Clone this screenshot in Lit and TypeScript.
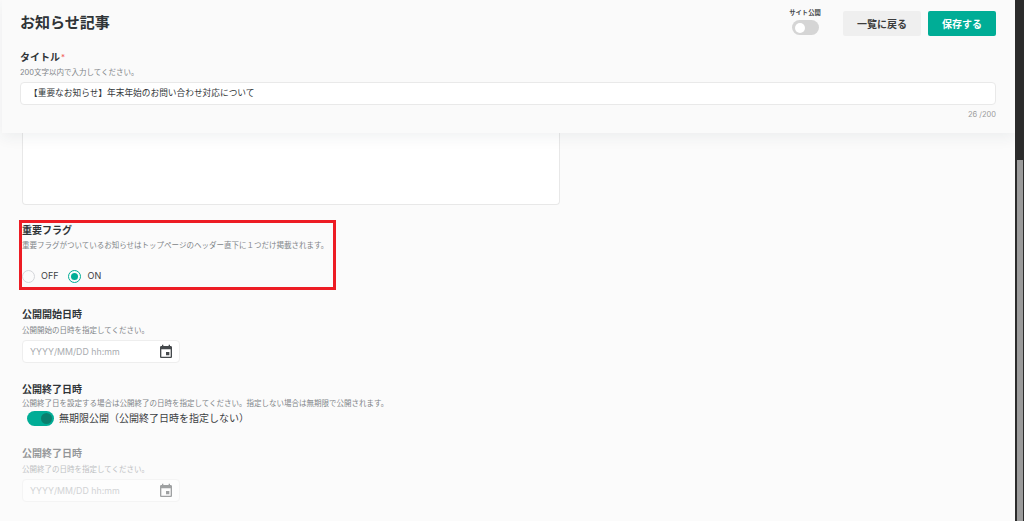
import { LitElement, html, css } from "lit";
import { customElement } from "lit/decorators.js";

const cal = html`<svg class="cal" viewBox="0 0 24 24" width="16" height="16"><path fill="currentColor" d="M17 12h-5v5h5v-5zM16 1v2H8V1H6v2H5c-1.11 0-2 .9-2 2v14c0 1.1.89 2 2 2h14c1.1 0 2-.9 2-2V5c0-1.1-.9-2-2-2h-1V1h-2zm3 18H5V8h14v11z"/></svg>`;

@customElement("app-root")
export class AppRoot extends LitElement {
  static styles = css`
    :host { display: block; height: 521px; overflow: hidden; font-family: Inter, "Noto Sans CJK JP", sans-serif; color: #2f3437; background: #fbfbfb; }
    * { box-sizing: border-box; }
    .page { display: flex; height: 521px; }
    .main { flex: 1; min-width: 0; padding-left: 2px; display: flex; flex-direction: column; overflow: hidden; }
    .head { position: relative; z-index: 1; flex: none; height: 133px; background: #fafafa; box-shadow: 0 4px 14px rgba(40,50,70,.07); padding: 0 19px 0 18px; }
    .top { display: flex; align-items: flex-start; height: 50px; }
    h1 { margin: 13px 0 0; font-size: 15px; line-height: 20px; font-weight: 700; flex: 1; }
    .pub { width: 40px; margin: 9px 18px 0 0; display: flex; flex-direction: column; align-items: center; }
    .pub span { font-size: 6.3px; line-height: 9px; font-weight: 700; white-space: nowrap; color: #45494c; }
    .sw { width: 27px; height: 15px; margin-top: 2px; border-radius: 8px; background: #d5d5d5; padding: 2px; }
    .sw i { display: block; width: 10px; height: 10px; margin: 1px 0 0 1px; border-radius: 50%; background: #fff; }
    .btn { height: 25px; margin-top: 11px; border-radius: 2px; font-size: 10px; font-weight: 700; display: flex; align-items: center; justify-content: center; }
    .back { width: 78px; background: #efefef; color: #3c3c3c; margin-right: 7px; }
    .save { width: 68px; background: #00ad96; color: #fff; }
    .lab { font-size: 10px; line-height: 14px; font-weight: 700; color: #2f3437; }
    .lab em { color: #f05a5a; font-style: normal; font-weight: 400; font-size: 8px; vertical-align: top; margin-left: 1px; }
    .hint { font-size: 7.5px; line-height: 12px; color: #808488; white-space: nowrap; }
    .head .hint { margin-top: 3px; }
    .title-in { height: 23px; margin-top: 3px; background: #fff; border: 1px solid #e9e9e9; border-radius: 4px; font-size: 8.7px; line-height: 21px; padding-left: 8px; color: #33373a; }
    .count { text-align: right; font-size: 7.5px; line-height: 10px; margin-top: 5px; color: #9a9a9a; }
    .body { flex: 1; padding-left: 20px; display: flex; flex-direction: column; align-items: flex-start; }
    .area { width: 538px; height: 72px; background: #fff; border: 1px solid #e8e8e8; border-top: 0; border-radius: 0 0 4px 4px; }
    .flag { width: 317px; height: 70px; margin: 15px 0 0 -3px; border: 3px solid #ed1c24; }
    .flag .hint { margin-top: 3px; }
    .radios { display: flex; align-items: center; margin-top: 17px; font-size: 9px; line-height: 14px; color: #3c4043; }
    .r { width: 13px; height: 13px; border-radius: 50%; border: 1px solid #d4d6da; flex: none; }
    .r.on { border: 1.5px solid #00ad96; display: flex; align-items: center; justify-content: center; margin-left: 9px; }
    .r.on i { width: 7px; height: 7px; border-radius: 50%; background: #00ad96; }
    .rt { margin-left: 6px; }
    .r.on + .rt { margin-left: 7px; }
    .sec { margin-top: 17px; }
    .sec .hint { margin-top: 4px; }
    .date { width: 158px; height: 23px; margin-top: 3px; background: #fff; border: 1px solid #eeeeee; border-radius: 4px; display: flex; align-items: center; justify-content: space-between; padding: 0 5px 0 7px; font-size: 8.8px; color: #a9acb0; }
    .cal { color: #45494c; display: block; }
    .inf { display: flex; align-items: center; font-size: 10px; line-height: 15px; color: #3c4043; margin: 1px 0 0 5px; }
    .tog { width: 27px; height: 15px; border-radius: 8px; background: #00ad96; margin-right: 5px; display: flex; justify-content: flex-end; padding: 2px 2px; }
    .tog i { width: 11px; height: 11px; border-radius: 50%; background: #0a7f6e; }
    .dis { opacity: .5; }
    .end { margin-top: 19px; }
    .end .hint { margin-top: 2px; }
    .last { margin-top: 20px; }
    .bar { flex: none; width: 9px; background: #2b2b2b; padding: 160px 1px 0 2px; }
    .thumb { height: 361px; background: #9b9b9b; }
  `;

  render() {
    return html`<div class="page">
      <div class="main">
        <header class="head">
          <div class="top">
            <h1>お知らせ記事</h1>
            <div class="pub"><span>サイト公開</span><div class="sw"><i></i></div></div>
            <div class="btn back">一覧に戻る</div>
            <div class="btn save">保存する</div>
          </div>
          <div class="lab">タイトル<em>*</em></div>
          <div class="hint">200文字以内で入力してください。</div>
          <div class="title-in">【重要なお知らせ】年末年始のお問い合わせ対応について</div>
          <div class="count">26 /200</div>
        </header>
        <div class="body">
          <div class="area"></div>
          <section class="flag">
            <div class="lab">重要フラグ</div>
            <div class="hint">重要フラグがついているお知らせはトップページのヘッダー直下に１つだけ掲載されます。</div>
            <div class="radios">
              <span class="r"></span><span class="rt">OFF</span>
              <span class="r on"><i></i></span><span class="rt">ON</span>
            </div>
          </section>
          <section class="sec">
            <div class="lab">公開開始日時</div>
            <div class="hint">公開開始の日時を指定してください。</div>
            <div class="date"><span>YYYY/MM/DD hh:mm</span>${cal}</div>
          </section>
          <section class="sec end">
            <div class="lab">公開終了日時</div>
            <div class="hint">公開終了日を設定する場合は公開終了の日時を指定してください。指定しない場合は無期限で公開されます。</div>
            <div class="inf"><div class="tog"><i></i></div>無期限公開（公開終了日時を指定しない）</div>
          </section>
          <section class="sec dis last">
            <div class="lab">公開終了日時</div>
            <div class="hint">公開終了の日時を指定してください。</div>
            <div class="date"><span>YYYY/MM/DD hh:mm</span>${cal}</div>
          </section>
        </div>
      </div>
      <div class="bar"><div class="thumb"></div></div>
    </div>`;
  }
}
